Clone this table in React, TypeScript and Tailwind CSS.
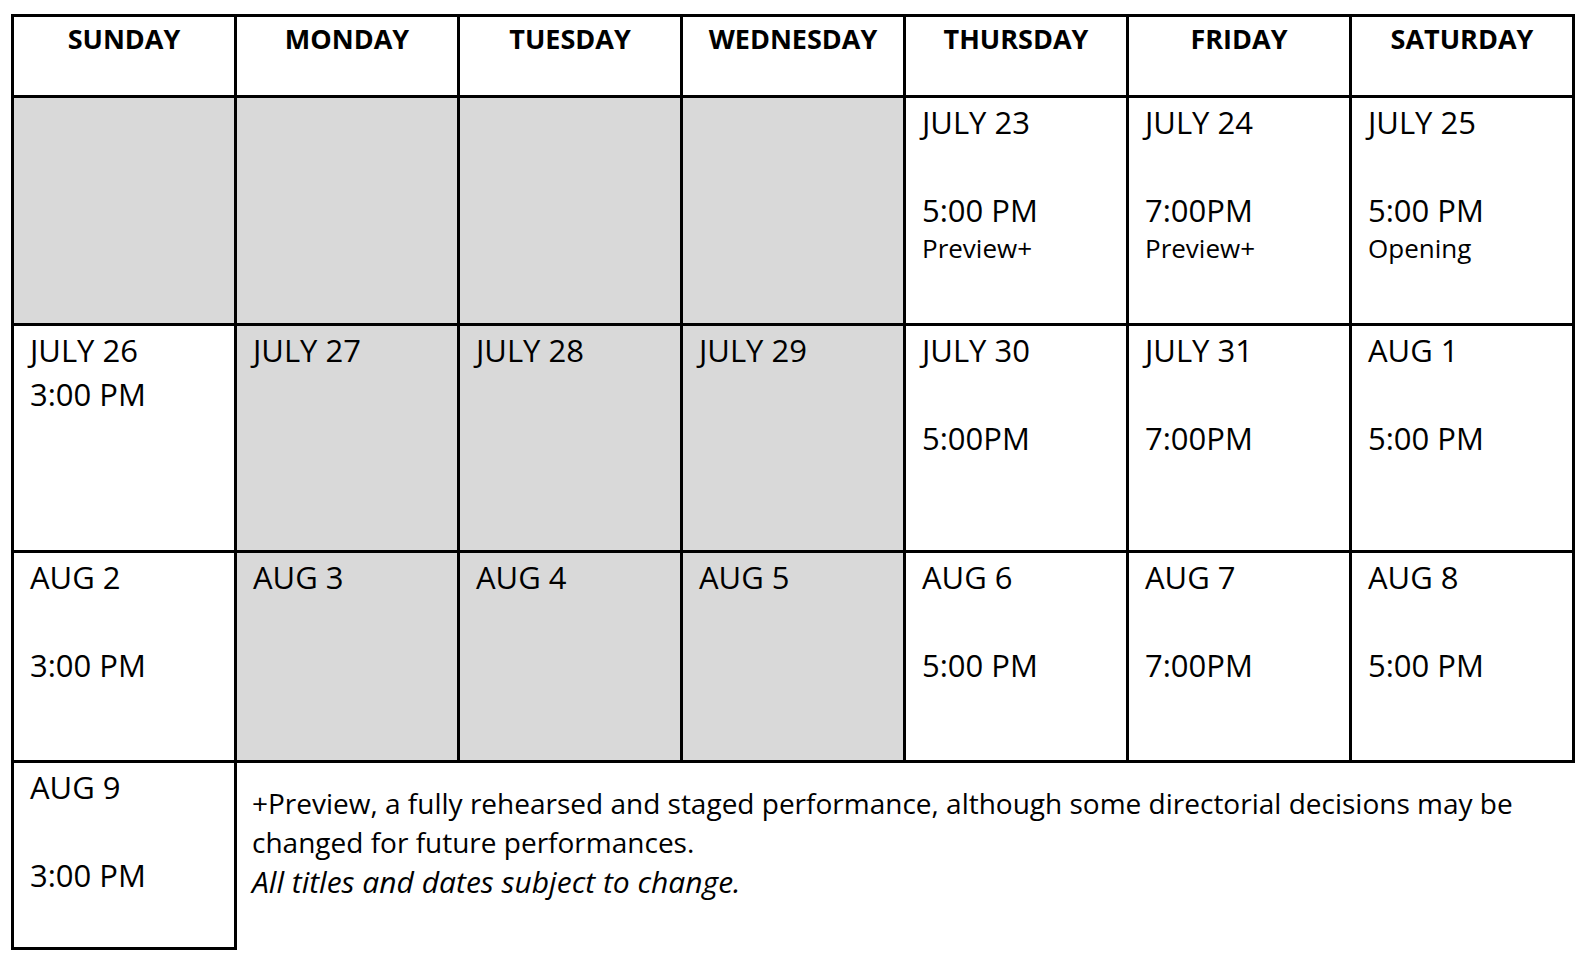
type Cell = { gray?: boolean; lines?: string[]; note?: string };

const days = ["SUNDAY", "MONDAY", "TUESDAY", "WEDNESDAY", "THURSDAY", "FRIDAY", "SATURDAY"];

const weeks: Cell[][] = [
  [
    { gray: true },
    { gray: true },
    { gray: true },
    { gray: true },
    { lines: ["JULY 23", "", "5:00 PM"], note: "Preview+" },
    { lines: ["JULY 24", "", "7:00PM"], note: "Preview+" },
    { lines: ["JULY 25", "", "5:00 PM"], note: "Opening" },
  ],
  [
    { lines: ["JULY 26", "3:00 PM"] },
    { gray: true, lines: ["JULY 27"] },
    { gray: true, lines: ["JULY 28"] },
    { gray: true, lines: ["JULY 29"] },
    { lines: ["JULY 30", "", "5:00PM"] },
    { lines: ["JULY 31", "", "7:00PM"] },
    { lines: ["AUG 1", "", "5:00 PM"] },
  ],
  [
    { lines: ["AUG 2", "", "3:00 PM"] },
    { gray: true, lines: ["AUG 3"] },
    { gray: true, lines: ["AUG 4"] },
    { gray: true, lines: ["AUG 5"] },
    { lines: ["AUG 6", "", "5:00 PM"] },
    { lines: ["AUG 7", "", "7:00PM"] },
    { lines: ["AUG 8", "", "5:00 PM"] },
  ],
];

function DayCell({ cell, last, bottom }: { cell: Cell; last: boolean; bottom: boolean }) {
  return (
    <div
      className={`border-black border-t-[3px] border-l-[3px] pl-[16px] pt-[2px] ${last ? "border-r-[3px]" : ""} ${
        bottom ? "border-b-[3px]" : ""
      } ${cell.gray ? "bg-[#d9d9d9]" : "bg-white"}`}
    >
      {cell.lines?.map((line, i) => (
        <div key={i} className="text-[31px] leading-[44px] whitespace-nowrap">
          {line || "\u00a0"}
        </div>
      ))}
      {cell.note && <div className="text-[26px] leading-[33px] whitespace-nowrap">{cell.note}</div>}
    </div>
  );
}

export default function App() {
  return (
    <div className="min-h-screen bg-white pl-[11px] pt-[14px] text-black font-['Open_Sans',sans-serif]">
      <div className="grid w-[1564px] grid-cols-[repeat(6,223px)_226px] grid-rows-[81px_228px_227px_213px_187px]">
        {days.map((day, i) => (
          <div
            key={day}
            className={`border-black border-t-[3px] border-l-[3px] pt-[4px] text-center ${
              i === 6 ? "border-r-[3px]" : ""
            }`}
          >
            <div className="text-[27px] font-bold leading-[36px]">{day}</div>
          </div>
        ))}

        {weeks.map((week, w) =>
          week.map((cell, i) => <DayCell key={`${w}-${i}`} cell={cell} last={i === 6} bottom={w === 2} />)
        )}

        <div className="border-black border-l-[3px] border-b-[3px] pl-[16px] pt-[2px]">
          <div className="text-[31px] leading-[44px]">AUG 9</div>
          <div className="text-[31px] leading-[44px]">{"\u00a0"}</div>
          <div className="text-[31px] leading-[44px]">3:00 PM</div>
        </div>

        <div className="col-span-6 border-black border-l-[3px] pl-[15px] pt-[21px] text-[28px] leading-[39px] whitespace-nowrap">
          <div>+Preview, a fully rehearsed and staged performance, although some directorial decisions may be</div>
          <div>changed for future performances.</div>
          <div className="italic text-[30px]">All titles and dates subject to change.</div>
        </div>
      </div>
    </div>
  );
}
